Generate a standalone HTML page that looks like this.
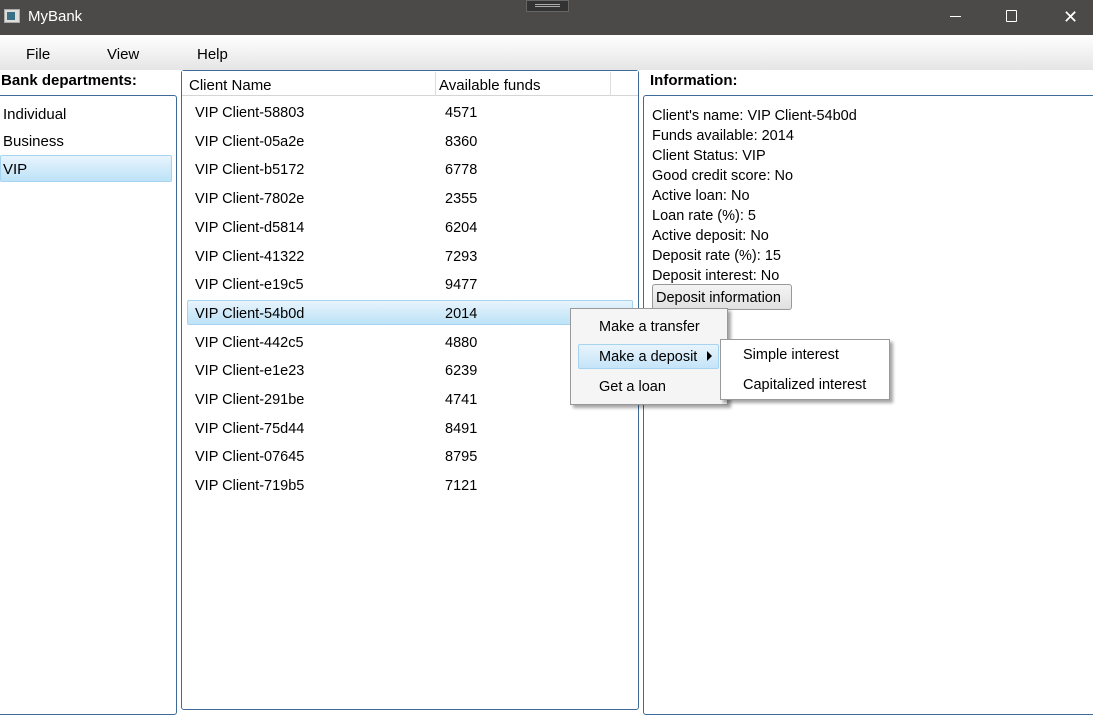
<!DOCTYPE html>
<html><head><style>
*{margin:0;padding:0;box-sizing:border-box}
body{width:1093px;height:701px;overflow:hidden;background:#fff;font-family:"Liberation Sans",sans-serif;font-size:14px;color:#000;position:relative}
.a{position:absolute;white-space:nowrap}
</style></head><body>
<div class="a" style="left:0;top:0;width:1093px;height:35px;background:#4b4a48"></div>
<div class="a" style="left:4px;top:9px;width:16px;height:14px;background:#ddd;border:1px solid #aaa"><div style="margin:2px;width:8px;height:8px;background:#3a6f86"></div></div>
<div class="a" style="left:28px;top:8px;color:#fff;font-size:15px">MyBank</div>
<div class="a" style="left:526px;top:0;width:43px;height:12px;background:#333;border:1px solid #666"><div style="margin:3px 8px;height:3px;border-top:1px solid #aaa;border-bottom:1px solid #aaa"></div></div>
<div class="a" style="left:950px;top:16px;width:11px;height:1px;background:#fff"></div>
<div class="a" style="left:1006px;top:10px;width:11px;height:12px;border:1px solid #fff;border-radius:1px"></div>
<div class="a" style="left:1063px;top:7px;color:#fff;font-size:18px">✕</div>
<div class="a" style="left:0;top:35px;width:1093px;height:35px;background:linear-gradient(#fff,#f2f2f2 50%,#e5e5e5)"></div>
<div class="a" style="left:26px;top:46px;font-size:15px">File</div>
<div class="a" style="left:107px;top:46px;font-size:15px">View</div>
<div class="a" style="left:197px;top:46px;font-size:15px">Help</div>
<div class="a" style="left:1px;top:72px;font-weight:bold;font-size:15px">Bank departments:</div>
<div class="a" style="left:-3px;top:95px;width:180px;height:620px;border:1px solid #3d6a96;border-radius:3px"></div>
<div class="a" style="left:3px;top:106px;font-size:15px">Individual</div>
<div class="a" style="left:3px;top:133px;font-size:15px">Business</div>
<div class="a" style="left:0;top:155px;width:172px;height:27px;background:linear-gradient(#e8f4fc,#d2ebfa 50%,#bde3f8);border:1px solid #a6d3f0;border-radius:2px"></div>
<div class="a" style="left:3px;top:161px;font-size:15px">VIP</div>
<div class="a" style="left:181px;top:70px;width:458px;height:640px;border:1px solid #3d6a96;border-radius:3px"></div>
<div class="a" style="left:182px;top:71px;width:456px;height:25px;background:#fff;border-bottom:1px solid #d5d5d5"></div>
<div class="a" style="left:435px;top:72px;width:1px;height:24px;background:#ddd"></div>
<div class="a" style="left:610px;top:72px;width:1px;height:24px;background:#ddd"></div>
<div class="a" style="left:189px;top:77px;font-size:15px">Client Name</div>
<div class="a" style="left:439px;top:77px;font-size:15px">Available funds</div>
<div class="a" style="left:187px;top:300px;width:446px;height:25px;background:linear-gradient(#e8f4fc,#d2ebfa 50%,#bde3f8);border:1px solid #a6d3f0;border-radius:2px"></div>
<div id="rows"></div>
<div class="a" style="left:650px;top:72px;font-weight:bold;font-size:15px">Information:</div>
<div class="a" style="left:643px;top:95px;width:460px;height:620px;border:1px solid #3d6a96;border-radius:3px"></div>
<div class="a" style="left:652px;top:106px;font-size:14.5px;line-height:20px">Client's name: VIP Client-54b0d<br>Funds available: 2014<br>Client Status: VIP<br>Good credit score: No<br>Active loan: No<br>Loan rate (%): 5<br>Active deposit: No<br>Deposit rate (%): 15<br>Deposit interest: No</div>
<div class="a" style="left:652px;top:284px;width:140px;height:26px;border:1px solid #999;border-radius:3px;background:linear-gradient(#f4f4f4,#e0e0e0);font-size:14.5px;padding:5px 0 0 3px">Deposit information</div>
<div class="a" style="left:570px;top:308px;width:158px;height:97px;background:#f5f5f5;border:1px solid #999;box-shadow:3px 3px 3px rgba(0,0,0,.35)"></div>
<div class="a" style="left:578px;top:344px;width:141px;height:25px;background:linear-gradient(#e8f4fc,#c5e4f8);border:1px solid #a6d3f0;border-radius:2px"></div>
<div class="a" style="left:599px;top:319px;font-size:14.5px">Make a transfer</div>
<div class="a" style="left:599px;top:349px;font-size:14.5px">Make a deposit</div>
<div class="a" style="left:707px;top:351px;width:0;height:0;border-left:5px solid #000;border-top:5px solid transparent;border-bottom:5px solid transparent"></div>
<div class="a" style="left:599px;top:379px;font-size:14.5px">Get a loan</div>
<div class="a" style="left:720px;top:339px;width:170px;height:61px;background:#fff;border:1px solid #999;box-shadow:3px 3px 3px rgba(0,0,0,.35)"></div>
<div class="a" style="left:743px;top:347px;font-size:14.5px">Simple interest</div>
<div class="a" style="left:743px;top:377px;font-size:14.5px">Capitalized interest</div>
<script>
var d=[["58803",4571],["05a2e",8360],["b5172",6778],["7802e",2355],["d5814",6204],["41322",7293],["e19c5",9477],["54b0d",2014],["442c5",4880],["e1e23",6239],["291be",4741],["75d44",8491],["07645",8795],["719b5",7121]],h="";
d.forEach(function(r,i){var y=105+i*28.7;h+='<div class="a" style="left:195px;top:'+y+'px;font-size:14.5px">VIP Client-'+r[0]+'</div><div class="a" style="left:445px;top:'+y+'px;font-size:14.5px">'+r[1]+'</div>';});
document.getElementById("rows").innerHTML=h;
</script>
</body></html>
